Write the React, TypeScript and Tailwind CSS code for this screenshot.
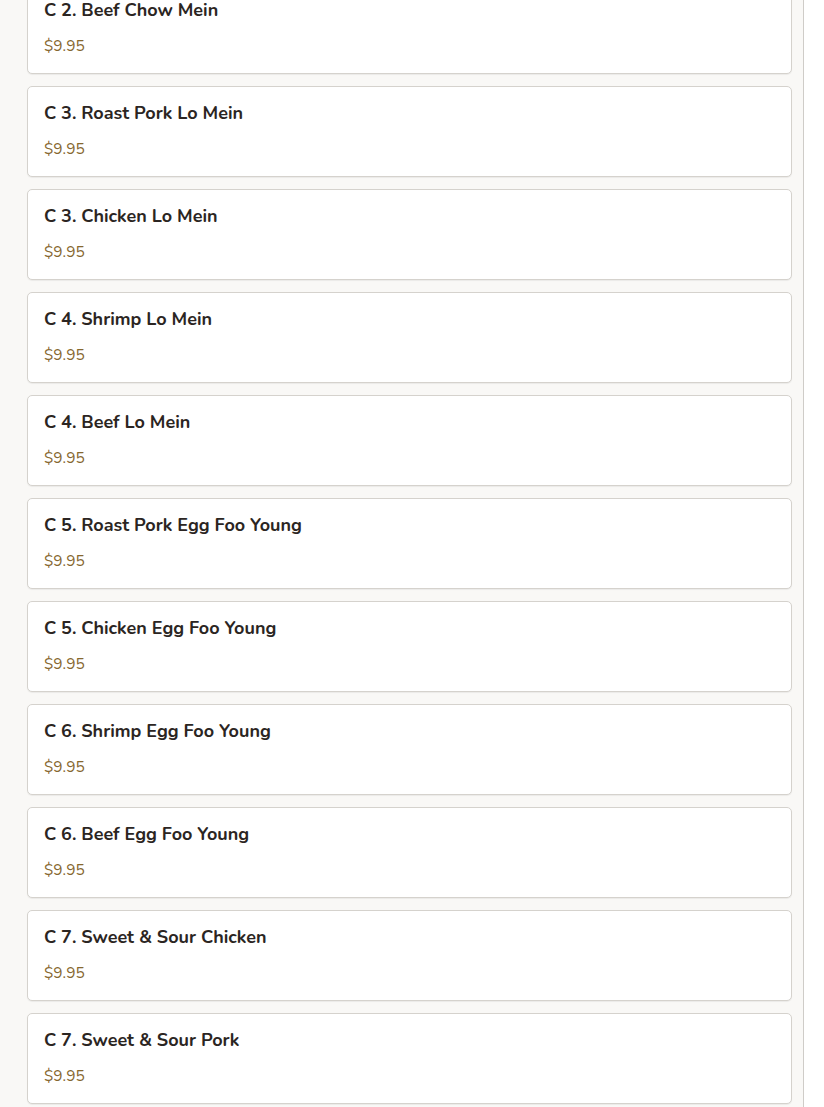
const items = [
  "C 2. Beef Chow Mein",
  "C 3. Roast Pork Lo Mein",
  "C 3. Chicken Lo Mein",
  "C 4. Shrimp Lo Mein",
  "C 4. Beef Lo Mein",
  "C 5. Roast Pork Egg Foo Young",
  "C 5. Chicken Egg Foo Young",
  "C 6. Shrimp Egg Foo Young",
  "C 6. Beef Egg Foo Young",
  "C 7. Sweet & Sour Chicken",
  "C 7. Sweet & Sour Pork",
];

function MenuItem({ name }: { name: string }) {
  return (
    <div className="h-[91px] rounded-[5px] border border-[#d5d2cd] bg-white px-4 pt-[12px] shadow-[0_1px_1px_rgba(0,0,0,0.06)]">
      <div className="text-[18px] font-bold leading-[28px] text-[#2b2522]">{name}</div>
      <div className="mt-[11px] text-[15.5px] leading-[22px] text-[#86672f]">$9.95</div>
    </div>
  );
}

export default function App() {
  return (
    <div
      className="flex h-[1107px] w-[824px] overflow-hidden bg-white"
      style={{ fontFamily: "Nunito, Lato, 'Open Sans', sans-serif" }}
    >
      <div className="w-[804px] shrink-0 border-r border-[#cfccc8] bg-[#f9f8f6] pl-[27px] pr-[11px]">
        <div className="mt-[-17px] flex flex-col gap-[12px]">
          {items.map((name, i) => (
            <MenuItem key={i} name={name} />
          ))}
        </div>
      </div>
    </div>
  );
}
